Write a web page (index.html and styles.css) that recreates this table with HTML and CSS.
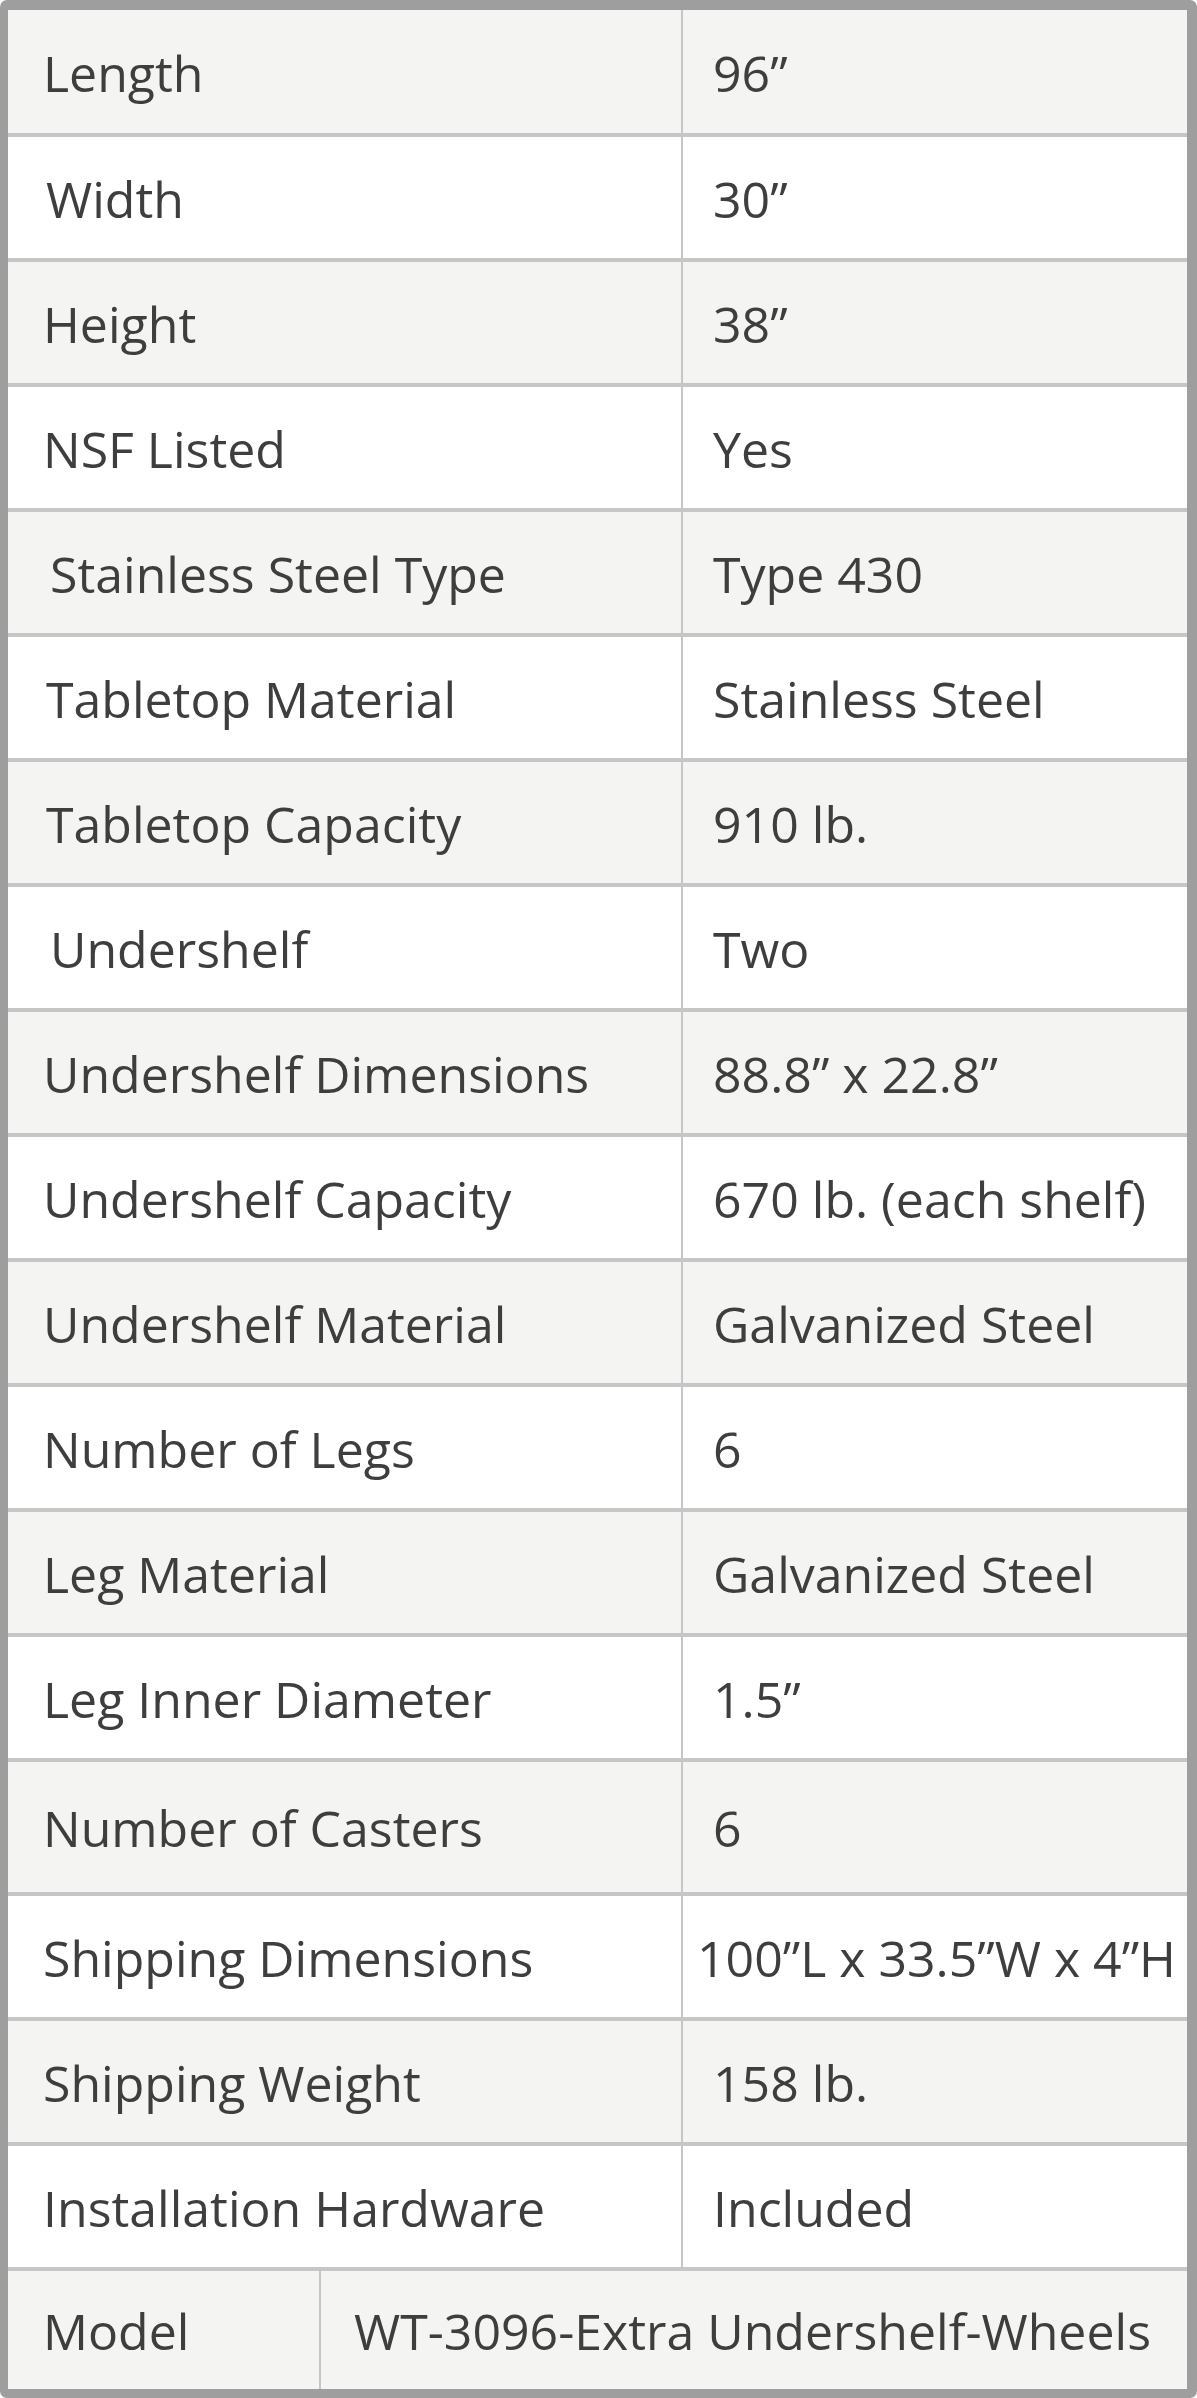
FILE: index.html
```
<!DOCTYPE html>
<html lang="en">
<head>
<meta charset="utf-8">
<title>Specifications</title>
<link rel="stylesheet" href="styles.css">
</head>
<body>
<div class="spec">
  <div class="row"><div class="label">Length</div><div class="value">96”</div></div>
  <div class="row"><div class="label indent-s">Width</div><div class="value">30”</div></div>
  <div class="row"><div class="label">Height</div><div class="value">38”</div></div>
  <div class="row"><div class="label">NSF Listed</div><div class="value">Yes</div></div>
  <div class="row"><div class="label indent-l">Stainless Steel Type</div><div class="value">Type 430</div></div>
  <div class="row"><div class="label indent-s">Tabletop Material</div><div class="value">Stainless Steel</div></div>
  <div class="row"><div class="label indent-s">Tabletop Capacity</div><div class="value">910 lb.</div></div>
  <div class="row"><div class="label indent-l">Undershelf</div><div class="value">Two</div></div>
  <div class="row"><div class="label">Undershelf Dimensions</div><div class="value">88.8” x 22.8”</div></div>
  <div class="row"><div class="label">Undershelf Capacity</div><div class="value">670 lb. (each shelf)</div></div>
  <div class="row"><div class="label">Undershelf Material</div><div class="value">Galvanized Steel</div></div>
  <div class="row"><div class="label">Number of Legs</div><div class="value">6</div></div>
  <div class="row"><div class="label">Leg Material</div><div class="value">Galvanized Steel</div></div>
  <div class="row"><div class="label">Leg Inner Diameter</div><div class="value">1.5”</div></div>
  <div class="row row-tall"><div class="label">Number of Casters</div><div class="value">6</div></div>
  <div class="row"><div class="label">Shipping Dimensions</div><div class="value value-wide">100”L x 33.5”W x 4”H</div></div>
  <div class="row"><div class="label">Shipping Weight</div><div class="value">158 lb.</div></div>
  <div class="row"><div class="label">Installation Hardware</div><div class="value">Included</div></div>
  <div class="row row-model"><div class="label label-model">Model</div><div class="value value-model">WT-3096-Extra Undershelf-Wheels</div></div>
</div>
</body>
</html>
```
FILE: styles.css
```
html, body {
  margin: 0;
  padding: 0;
  background: #ffffff;
}

.spec {
  width: 1197px;
  box-sizing: border-box;
  border-style: solid;
  border-color: #9e9e9e;
  border-width: 10px 10px 9px 8px;
  border-radius: 7px;
  overflow: hidden;
  font-family: "Open Sans", "Lato", sans-serif;
  font-size: 50px;
  color: #3e3e3e;
}

.row {
  display: flex;
  height: 121px;
  border-top: 4px solid #c6c6c6;
  background: #ffffff;
}

.row:nth-child(odd) {
  background: #f4f4f2;
}

.row:first-child {
  border-top: none;
  height: 123px;
}

.row-tall {
  height: 130px;
}

.row-model {
  height: 118px;
}

.label {
  width: 675px;
  flex: none;
  box-sizing: border-box;
  border-right: 2px solid #c6c6c6;
  padding-left: 35px;
  padding-top: 2px;
  display: flex;
  align-items: center;
  white-space: nowrap;
}

.indent-s {
  padding-left: 38px;
}

.indent-l {
  padding-left: 42px;
}

.label-model {
  width: 313px;
}

.value {
  flex: 1;
  padding-left: 30px;
  padding-top: 2px;
  display: flex;
  align-items: center;
  white-space: nowrap;
}

.value-wide {
  padding-left: 14px;
}

.value-model {
  padding-left: 33px;
}
```
